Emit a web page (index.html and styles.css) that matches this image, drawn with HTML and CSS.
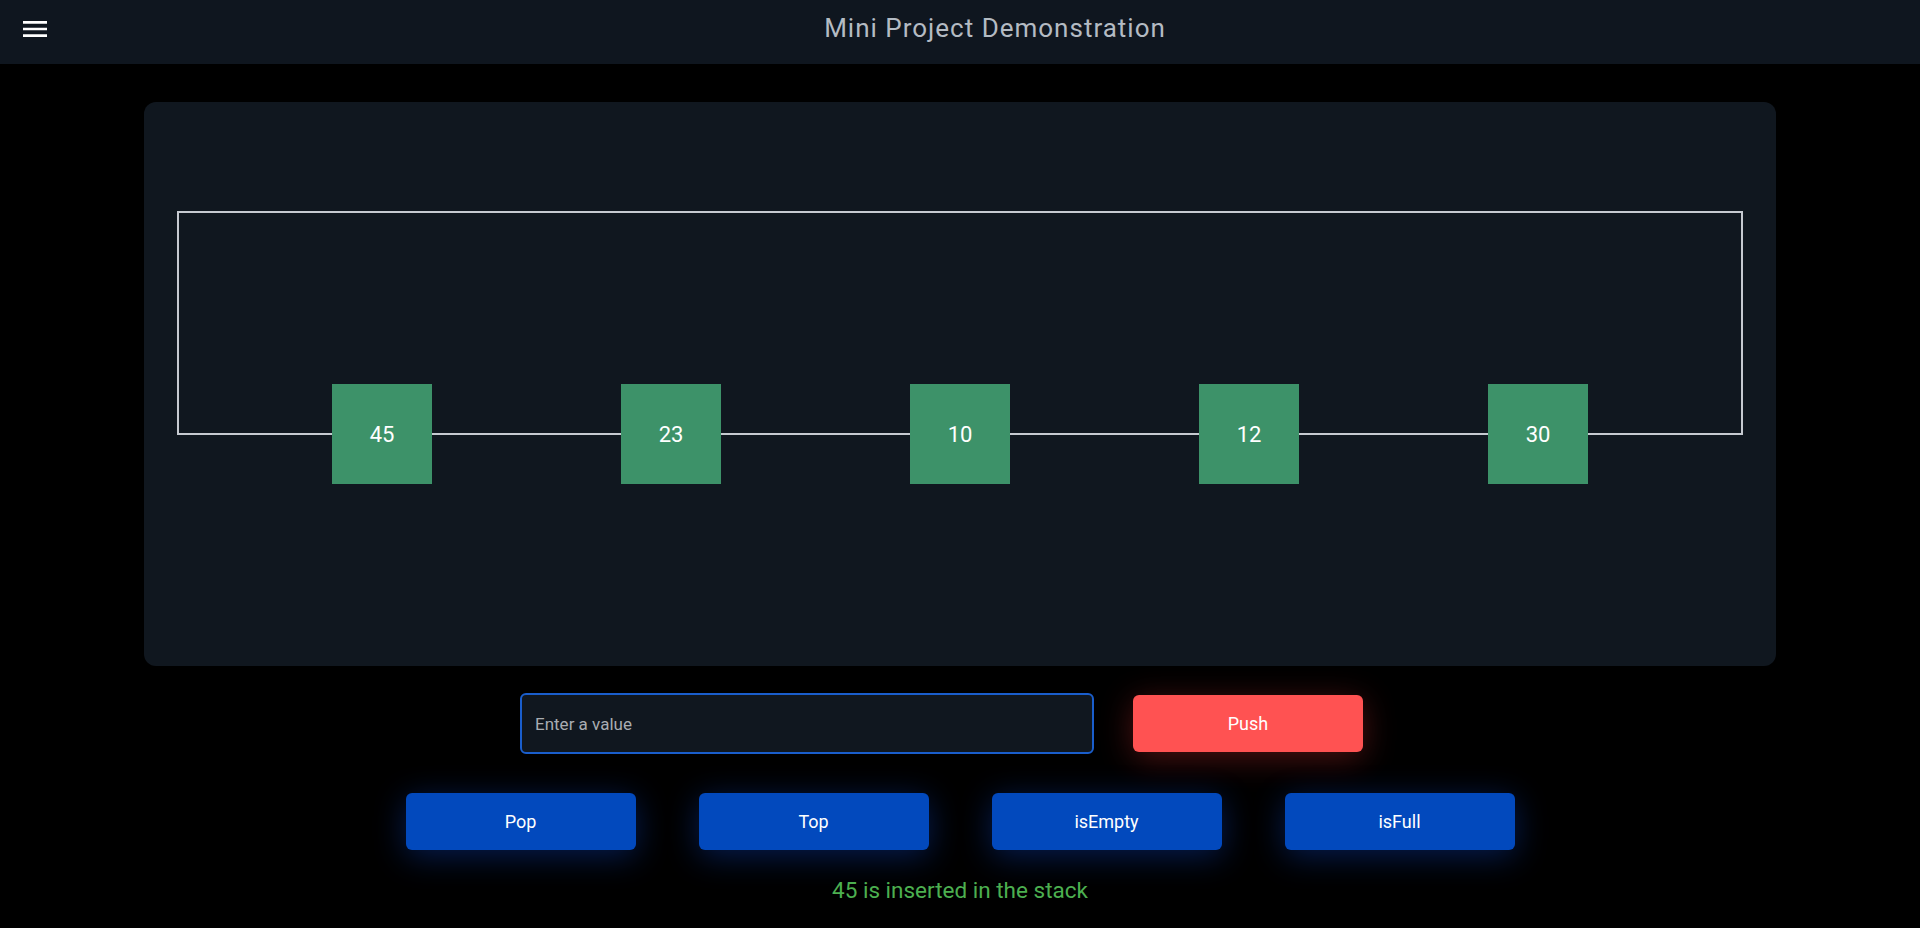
FILE: index.html
```html
<!DOCTYPE html>
<html lang="en">
<head>
<meta charset="utf-8">
<title>Mini Project Demonstration</title>
<link rel="stylesheet" href="styles.css">
</head>
<body>
<header class="topbar">
  <button class="menu-btn" aria-label="menu">
    <svg viewBox="0 0 24 24" width="32" height="32"><path fill="#ffffff" d="M3 18h18v-2H3v2zm0-5h18v-2H3v2zm0-7v2h18V6H3z"/></svg>
  </button>
  <h1 class="title">Mini Project Demonstration</h1>
</header>
<main class="main">
  <section class="card">
    <div class="frame">
      <div class="stack-row">
        <div class="item">45</div>
        <div class="item">23</div>
        <div class="item">10</div>
        <div class="item">12</div>
        <div class="item">30</div>
      </div>
    </div>
  </section>
  <div class="input-row">
    <input class="value-input" type="text" placeholder="Enter a value">
    <button class="btn btn-push">Push</button>
  </div>
  <div class="ops-row">
    <button class="btn btn-op">Pop</button>
    <button class="btn btn-op">Top</button>
    <button class="btn btn-op">isEmpty</button>
    <button class="btn btn-op">isFull</button>
  </div>
  <p class="status">45 is inserted in the stack</p>
</main>
</body>
</html>
```
FILE: styles.css
```css
* { box-sizing: border-box; }
html, body { margin: 0; padding: 0; }
body {
  background: #000000;
  font-family: Roboto, "Liberation Sans", sans-serif;
  color: #ffffff;
  width: 1920px;
  height: 928px;
  overflow: hidden;
}
.topbar {
  height: 64px;
  background: #0f161f;
  display: flex;
  align-items: flex-start;
}
.menu-btn {
  flex: 0 0 70px;
  height: 64px;
  padding: 13px 0 0 19px;
  border: 0;
  background: transparent;
  display: flex;
  align-items: flex-start;
}
.title {
  flex: 1;
  margin: 0;
  text-align: center;
  font-size: 26px;
  font-weight: 400;
  letter-spacing: 1px;
  color: #b4bbc3;
  line-height: 30px;
  padding-top: 13px;
}
.main {
  display: flex;
  flex-direction: column;
  align-items: center;
}
.card {
  margin-top: 38px;
  width: 1632px;
  height: 564px;
  background: #10171f;
  border-radius: 12px;
  padding: 109px 33px 0;
}
.frame {
  height: 224px;
  border: 2px solid #c6cad0;
  display: flex;
  flex-direction: column;
  justify-content: flex-end;
}
.stack-row {
  display: flex;
  justify-content: center;
  gap: 189px;
  margin-bottom: -51px;
}
.item {
  width: 100px;
  height: 100px;
  background: #3d9269;
  color: #ffffff;
  font-size: 22px;
  display: flex;
  align-items: center;
  justify-content: center;
}
.input-row {
  margin-top: 27px;
  display: flex;
  align-items: center;
  gap: 39px;
  margin-right: 37px;
}
.value-input {
  width: 574px;
  height: 61px;
  background: #10171f;
  border: 2px solid #1a5ecc;
  border-radius: 6px;
  padding: 0 13px;
  font-family: Roboto, "Liberation Sans", sans-serif;
  font-size: 17px;
  color: #ffffff;
  outline: none;
}
.value-input::placeholder { color: #a9adb2; }
.btn {
  width: 230px;
  height: 57px;
  border: 0;
  border-radius: 6px;
  color: #ffffff;
  font-family: Roboto, "Liberation Sans", sans-serif;
  font-size: 18px;
  font-weight: 400;
}
.btn-push {
  background: #ff5252;
  box-shadow: 0 6px 32px rgba(255, 60, 60, 0.3);
}
.ops-row {
  margin-top: 39px;
  display: flex;
  gap: 63px;
}
.btn-op {
  background: #0249bd;
  box-shadow: 0 6px 32px rgba(20, 90, 255, 0.32);
}
.status {
  margin: 26px 0 0;
  font-size: 22.5px;
  color: #4caf50;
  line-height: 28px;
}
```
